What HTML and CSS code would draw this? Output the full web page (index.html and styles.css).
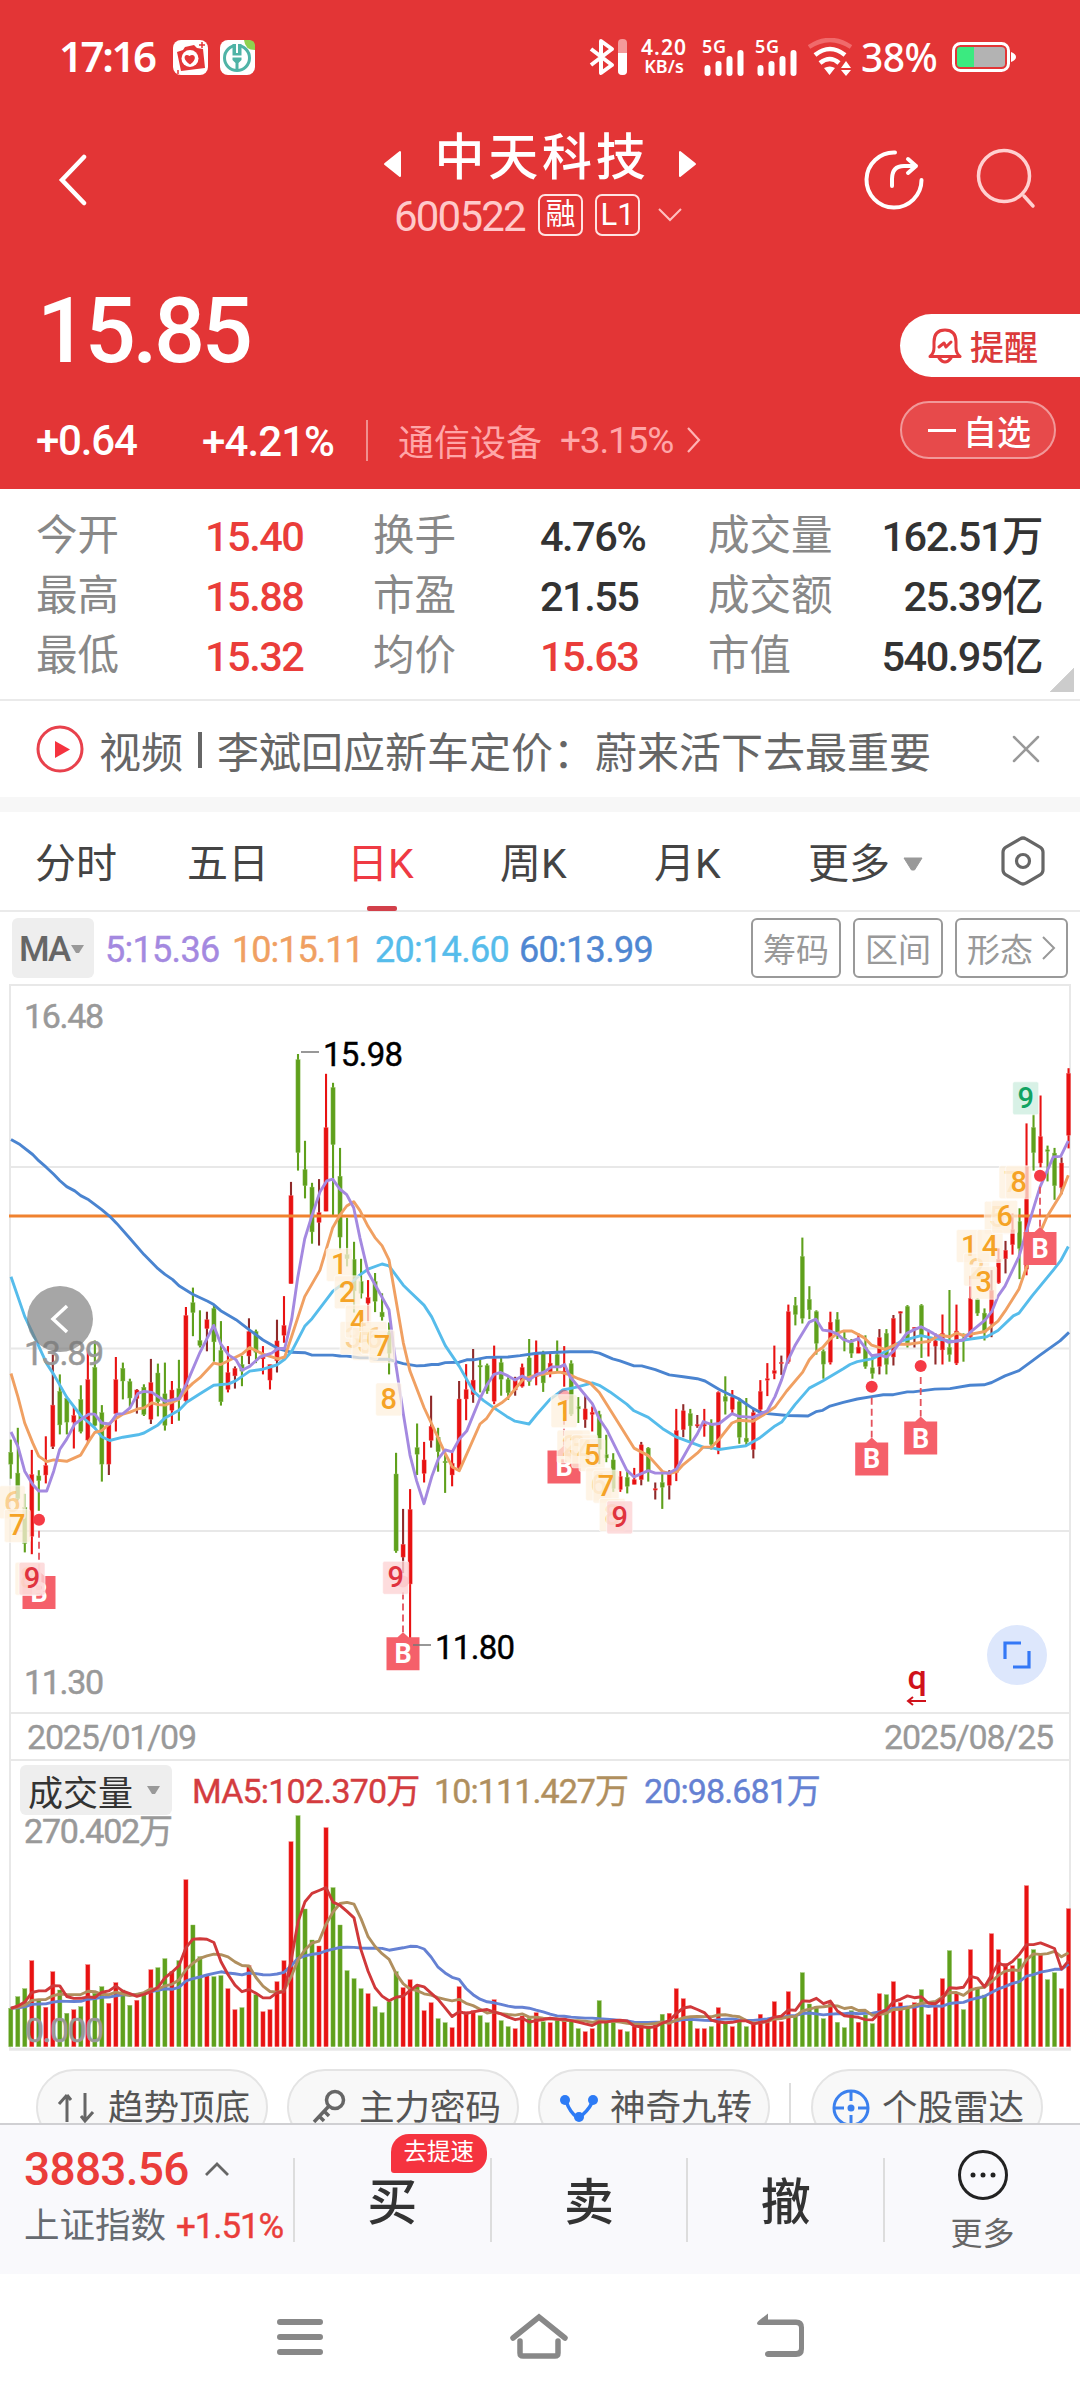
FILE: index.html
```html
<!DOCTYPE html>
<html lang="zh-CN">
<head>
<meta charset="utf-8">
<title>中天科技 600522</title>
<link rel="stylesheet" href="styles.css">
</head>
<body>
<header class="top">
  <div class="status">
    <span class="time">17:16</span>
    <svg class="app-a" width="35" height="35" viewBox="0 0 35 35"><rect width="35" height="35" rx="8" fill="#fff"/><path d="M4 12l6-2 2-3 9-2 3 3 6 1 2 19-24 3z" fill="#e33536"/><circle cx="17" cy="18.500" r="8.500" fill="#fff"/><path d="M17 24.500c-9-6-5-12-.5-8.500 4-3.500 9.500 2 .5 8.500z" fill="#e33536"/><path d="M29 2v6M26 5h6M5 30v4" stroke="#e33536" stroke-width="1.500"/></svg>
    <svg width="35" height="35" viewBox="0 0 35 35"><rect width="35" height="35" rx="8" fill="#fff"/><path d="M24 0h5q6 0 6 6v4Q25 10 24 0z" fill="#8fd14f"/><circle cx="17" cy="18" r="12.500" fill="none" stroke="#4fb3a6" stroke-width="3"/><path d="M12.500 4h9v16l-3 3v8h-3v-8l-3-3z" fill="#4fb3a6"/><path d="M17 4v9M12 16.500h10" stroke="#fff" stroke-width="2"/></svg>
    <span class="grow"></span>
    <svg width="38" height="38" viewBox="0 0 38 38"><path d="M2 11l21 16-11 8V3l11 8L2 27" fill="none" stroke="#fff" stroke-width="4" stroke-linejoin="round"/><rect x="29" y="1" width="9" height="36" rx="4" fill="#f4999a"/><path d="M29 15h9v18q0 4-4.500 4T29 33z" fill="#fff"/></svg>
    <span class="net"><b>4.20</b><b>KB/s</b></span>
    <svg width="42" height="38" viewBox="0 0 42 38" class="sig"><text x="0" y="14.500" textLength="24">5G</text><path d="M5.500 30v5M16.500 26v9M27.500 21v14M38.500 15v20" class="bars"/></svg>
    <svg width="42" height="38" viewBox="0 0 42 38" class="sig s2"><text x="0" y="14.500" textLength="24">5G</text><path d="M5.500 30v5M16.500 26v9M27.500 21v14M38.500 15v20" class="bars"/></svg>
    <svg class="wifi" width="44" height="38" viewBox="0 0 44 38"><g fill="none" stroke="#fff" stroke-width="4.500"><path d="M1 9q21-14 42 0" stroke="#f06a6b"/><path d="M7 17q15-12 30 0M12 25q10-8 19 0"/></g><path d="M16 30q6-3 11 0l-5.500 7zM33 30l5-7 5 7zM33 32h10l-5 6z" fill="#fff"/></svg>
    <span class="pct">38%</span>
    <svg class="bat" width="66" height="32" viewBox="0 0 66 32"><rect x="1.500" y="2.500" width="55" height="27" rx="7" fill="none" stroke="#fff" stroke-width="3"/><path d="M5 9q0-3 3-3h14v20H8q-3 0-3-3z" fill="#3bea80"/><path d="M22 6h27q4 0 4 3v14q0 3-4 3H22z" fill="#b3b3b3"/><path d="M59 11q5 2 5 5t-5 5z" fill="#fff"/></svg>
  </div>

  <nav class="titlebar">
    <svg class="back" width="32" height="52" viewBox="0 0 32 52"><path d="M28 3L6 26l22 23" fill="none" stroke="#fff" stroke-width="4.500" stroke-linecap="round"/></svg>
    <div class="name">
      <div class="name-row">
        <svg width="20" height="28" viewBox="0 0 20 28"><path d="M17 2v24L2 14z" fill="#fff" stroke="#fff" stroke-width="2" stroke-linejoin="round"/></svg>
        <h1>中天科技</h1>
        <svg width="20" height="28" viewBox="0 0 20 28"><path d="M3 2v24l15-12z" fill="#fff" stroke="#fff" stroke-width="2" stroke-linejoin="round"/></svg>
      </div>
      <div class="code-row"><span class="code">600522</span><span class="tag">融</span><span class="tag l1">L1</span>
        <svg width="26" height="16" viewBox="0 0 26 16"><path d="M2 2l11 11L24 2" fill="none" stroke="#ffc0c1" stroke-width="2"/></svg></div>
    </div>
    <svg class="share" width="62" height="62" viewBox="0 0 62 62"><g fill="none" stroke="#fff" stroke-width="4" stroke-linecap="round" stroke-linejoin="round"><path d="M32 3.500A27.500 27.500 0 1 0 58.500 31"/><path d="M29 37v-7q0-13 12-13h12M45 10l8 7-8 7"/></g></svg>
    <svg class="search" width="62" height="62" viewBox="0 0 62 62"><circle cx="28" cy="28" r="25.500" fill="none" stroke="#ffd0d0" stroke-width="3.500"/><path d="M48 48l9 10" stroke="#ffd0d0" stroke-width="3.500" stroke-linecap="round"/></svg>
  </nav>

  <div class="quote">
    <div class="quote-main">
      <div class="price">15.85</div>
      <div class="change"><span class="diff">+0.64</span><span class="rate">+4.21%</span><span class="sector">通信设备</span><span class="sector-rate">+3.15%</span>
        <svg width="16" height="28" viewBox="0 0 16 28"><path d="M2 2l11 12L2 26" fill="none" stroke="#ffb3b4" stroke-width="2.200"/></svg></div>
    </div>
    <div class="actions">
      <span class="remind"><svg width="34" height="36" viewBox="0 0 34 36"><g fill="none" stroke="#e33b3e" stroke-width="3" stroke-linejoin="round" stroke-linecap="round"><path d="M2 28.500q4-3 4-9V14Q6 2 17 2t11 12v5.500q0 6 4 9z"/><path d="M11 30q6 8 12 0M11 19l5-4 2 4 5-5"/></g></svg>提醒</span>
      <span class="watch"><i></i>自选</span>
    </div>
  </div>
</header>

<section class="stats">
  <span class="k">今开</span><span class="v up">15.40</span><span class="k">换手</span><span class="v">4.76%</span><span class="k">成交量</span><span class="v end">162.51万</span>
  <span class="k">最高</span><span class="v up">15.88</span><span class="k">市盈</span><span class="v">21.55</span><span class="k">成交额</span><span class="v end">25.39亿</span>
  <span class="k">最低</span><span class="v up">15.32</span><span class="k">均价</span><span class="v up">15.63</span><span class="k">市值</span><span class="v end">540.95亿</span>
  <i class="corner"></i>
</section>

<section class="news">
  <svg width="48" height="48" viewBox="0 0 48 48"><circle cx="24" cy="24" r="22" fill="none" stroke="#e8414c" stroke-width="3"/><path d="M19 16v17l15-8.500z" fill="#f5333f"/></svg>
  <span class="headline">视频<i></i>李斌回应新车定价：蔚来活下去最重要</span>
  <svg class="close" width="28" height="28" viewBox="0 0 28 28"><path d="M2 2l24 24M26 2L2 26" stroke="#999" stroke-width="2.500" stroke-linecap="round"/></svg>
</section>

<nav class="tabs">
  <span>分时</span><span>五日</span><span class="on">日K</span><span>周K</span><span>月K</span><span class="more">更多<svg width="22" height="15" viewBox="0 0 22 15"><path d="M2 1h18L12.500 13h-3z" fill="#999" stroke="#999" stroke-linejoin="round"/></svg></span>
  <svg class="hex" width="46" height="50" viewBox="0 0 46 50"><path d="M20 3q3-2 6 0l14 8q3 2 3 5v18q0 3-3 5l-14 8q-3 2-6 0L6 39q-3-2-3-5V16q0-3 3-5z" fill="none" stroke="#666" stroke-width="3.200"/><circle cx="23" cy="25" r="6.500" fill="none" stroke="#666" stroke-width="3.200"/></svg>
</nav>

<div class="ma-row">
  <span class="ma-btn">MA<svg width="15" height="10" viewBox="0 0 15 10"><path d="M1 1h13L9 9H6z" fill="#999"/></svg></span>
  <span class="ma m5">5:15.36</span><span class="ma m10">10:15.11</span><span class="ma m20">20:14.60</span><span class="ma m60">60:13.99</span>
  <span class="box">筹码</span><span class="box">区间</span><span class="box wide">形态<svg width="14" height="26" viewBox="0 0 14 26"><path d="M1 2l11 11L1 24" fill="none" stroke="#999" stroke-width="2"/></svg></span>
</div>

<svg class="price-chart" id="price" width="1080" height="728" viewBox="0 984 1080 728">
  <path class="grid" d="M9 985H1071M10 1167H1070M10 1348.500H1070M10 1531H1070M10 984V1712M1070 984V1712"/>
  <g id="candles"></g>
  <path d="M9 1216H1071" stroke="#f0822f" stroke-width="2.800"/>
  <g id="averages"></g>
  <g id="marks"></g>
  <g class="axis"><text x="24" y="1028" textLength="80">16.48</text><text x="24" y="1364.500" textLength="80">13.89</text><text x="24" y="1693.500" textLength="80">11.30</text></g>
  <path d="M301 1052H319M413 1645H431" stroke="#777" stroke-width="1.500"/>
  <g class="peak"><text x="323" y="1066" textLength="80">15.98</text><text x="435" y="1659" textLength="80">11.80</text></g>
  <circle cx="60" cy="1319" r="33" fill="#777" fill-opacity=".65"/>
  <path d="M67 1306L53 1319l14 13" fill="none" stroke="#fff" stroke-width="3.500"/>
  <circle cx="1017" cy="1655" r="30" fill="#dde7fc"/>
  <path d="M1021 1643h-16v16M1013 1667h16v-16" fill="none" stroke="#3478f6" stroke-width="3.200"/>
  <text class="q" x="917" y="1689">q</text>
  <path d="M926 1701h-17M913 1697l-5 4 5 4" fill="none" stroke="#d0121b" stroke-width="2"/>
</svg>

<div class="dates"><span>2025/01/09</span><span>2025/08/25</span></div>

<section class="volume">
  <svg id="volume" width="1080" height="291" viewBox="0 1760 1080 291">
    <path class="grid" d="M10 1760V2049M1070 1760V2049"/>
    <g id="bars"></g><g id="vol-averages"></g>
    <path d="M9 2049.300H1071" stroke="#e8e8e8" stroke-width="3"/>
    <g class="axis light"><text x="24" y="1843" textLength="149">270.402万</text><text x="25" y="2042" textLength="79">0.000</text></g>
  </svg>
  <div class="vol-legend"><span class="vol-btn">成交量<svg width="15" height="10" viewBox="0 0 15 10"><path d="M1 1h13L9 9H6z" fill="#999"/></svg></span><span class="a5">MA5:102.370万</span><span class="a10">10:111.427万</span><span class="a20">20:98.681万</span></div>
</section>

<section class="pills">
  <span class="pill"><svg width="38" height="34" viewBox="0 0 38 34"><path d="M10 31V4M2 13l8-9M10 4l4 5M28 2v28M24 25l4 5 8-9" fill="none" stroke="#666" stroke-width="3"/></svg>趋势顶底</span>
  <span class="pill p2"><svg width="38" height="38" viewBox="0 0 38 38"><g fill="none" stroke="#666" stroke-width="3.500"><circle cx="24" cy="11" r="8.500"/><path d="M18 17L3 33M8 27l5 5M13 22l5 5"/></g></svg>主力密码</span>
  <span class="pill p3"><svg width="40" height="30" viewBox="0 0 40 30"><path d="M7 8q4 12 12 17 9-5 15-17" fill="none" stroke="#2d7bf5" stroke-width="3.500"/><g fill="#2d7bf5"><circle cx="6" cy="7" r="5"/><circle cx="34" cy="7" r="5"/><circle cx="20" cy="24" r="5"/></g></svg>神奇九转</span>
  <i class="bar"></i>
  <span class="pill p4"><svg width="38" height="38" viewBox="0 0 38 38"><g fill="none" stroke="#3b80ee" stroke-width="3"><circle cx="19" cy="19" r="17"/><path d="M19 2v10M19 26v10M2 19h10M26 19h10"/></g><circle cx="19" cy="19" r="3.500" fill="#3b80ee"/></svg>个股雷达</span>
</section>

<footer class="trade">
  <div class="index"><div class="idx">3883.56<svg width="26" height="16" viewBox="0 0 26 16"><path d="M2 14L13 3l11 11" fill="none" stroke="#666" stroke-width="2.800"/></svg></div><div class="idx-name">上证指数<b>+1.51%</b></div></div>
  <div class="act">买<em>去提速</em></div><div class="act">卖</div><div class="act">撤</div>
  <div class="act last"><svg width="52" height="52" viewBox="0 0 52 52"><circle cx="26" cy="26" r="23.500" fill="none" stroke="#222" stroke-width="3"/><g fill="#222"><circle cx="16" cy="26" r="2.500"/><circle cx="26" cy="26" r="2.500"/><circle cx="36" cy="26" r="2.500"/></g></svg><span>更多</span></div>
</footer>

<nav class="system">
  <svg width="46" height="44" viewBox="0 0 46 44"><path d="M3 8h40M3 23h40M3 38h40" stroke="#888" stroke-width="6" stroke-linecap="round"/></svg>
  <svg width="60" height="48" viewBox="0 0 60 48"><path d="M4 26L30 5l26 21M11 29v12q0 3 3 3h32q3 0 3-3V29" fill="none" stroke="#888" stroke-width="5.500" stroke-linecap="round"/></svg>
  <svg width="52" height="46" viewBox="0 0 52 46"><path d="M5 7.500L14 .5v6h28q8 0 8 8V36q0 8-8 8H14q-3-.5-3-3t3-3h28q3 0 3-3V15q0-3-3-3H5q-4-1-0-4.500z" fill="#888"/></svg>
</nav>
<script src="chart.js"></script>
</body>
</html>
```
FILE: styles.css
```css
* { box-sizing: border-box; }
body { margin: 0; width: 1080px; height: 2400px; overflow: hidden; background: #fff; color: #333; font-family: Roboto, "Noto Sans CJK SC", sans-serif; }
svg { display: block; flex: none; }
h1, i, em, b { margin: 0; font-style: normal; }
.grow { flex: 1; }

.top { height: 489px; background: #e33536; color: #fff; }
.status { display: flex; align-items: center; height: 114px; padding: 0 64px 0 59px; }
.time { width: 114px; padding-bottom: 2px; font: 600 42px/1 "Noto Sans", sans-serif; letter-spacing: -2.400px; }
.app-a { margin-right: 12px; }
.net { display: flex; flex-direction: column; width: 50px; margin-left: 12px; font: 600 20px/19px "Noto Sans", sans-serif; text-align: center; }
.net b { font-weight: 600; }
.net b + b { font-size: 18px; }
.net b:first-child { letter-spacing: 1px; font-size: 21px; }
.sig { margin-left: 13px; font: 600 18px "Noto Sans", sans-serif; fill: #fff; overflow: visible; }
.sig.s2 { margin-left: 11px; }
.bars { stroke: #fff; stroke-width: 6; stroke-linecap: round; }
.wifi { margin-left: 11px; }
.pct { width: 80px; margin-left: 9px; padding-bottom: 2px; font: 500 39px/1 "Noto Sans", sans-serif; letter-spacing: -.6px; white-space: nowrap; }
.bat { margin-left: 11px; margin-right: -2px; }

.titlebar { display: flex; height: 150px; padding: 0 42px 0 56px; }
.back { margin-top: 40px; }
.name { width: 314px; margin-left: 295px; }
.name-row { display: flex; align-items: center; justify-content: space-between; height: 84px; margin-top: 2px; }
.name-row svg { margin-top: 12px; }
h1 { font-size: 50px; font-weight: 500; line-height: 84px; letter-spacing: 3.700px; margin-right: -4px; }
.code-row { display: flex; align-items: center; height: 42px; margin-top: -6px; padding-left: 11px; white-space: nowrap; }
.code { width: 144px; padding-top: 3px; font-size: 42px; color: #ffc9ca; letter-spacing: -1.800px; }
.tag { width: 45px; height: 42px; margin-right: 12px; border: 2px solid #ffe3e3; border-radius: 7px; font-size: 30px; line-height: 36px; text-align: center; }
.l1 { font-size: 31px; margin-right: 17px; line-height: 38px; }
.share { margin: 35px 0 0 166px; }
.search { margin: 34px 0 0 51px; }

.quote { display: flex; justify-content: space-between; }
.price { height: 130px; padding-left: 37px; font-size: 90px; font-weight: 500; line-height: 136px; letter-spacing: -3.400px; }
.change { display: flex; align-items: center; height: 60px; margin-top: 16px; padding-left: 36px; font-size: 42px; font-weight: 500; white-space: nowrap; letter-spacing: -1.200px; }
.diff { width: 166px; }
.rate { width: 166px; height: 41px; line-height: 43px; border-right: 2px solid #f0908f; letter-spacing: -.9px; }
.sector { width: 162px; margin-left: 30px; font-size: 36px; font-weight: 400; color: #ffa6a8; letter-spacing: 0; }
.sector-rate { width: 126px; font-size: 37px; font-weight: 400; color: #ffa6a8; }
.actions { width: 180px; padding-top: 50px; font-size: 34px; font-weight: 500; }
.remind { display: flex; align-items: center; gap: 8px; height: 63px; padding-left: 28px; border-radius: 32px 0 0 32px; background: #fff; color: #db3a3b; }
.watch { display: flex; align-items: center; gap: 7px; width: 156px; height: 58px; margin-top: 24px; padding-left: 26px; border: 2px solid #f19899; border-radius: 29px; background: #e74a4b; }
.watch i { width: 28px; height: 3px; background: #fff; }

.stats { display: grid; grid-template-columns: 169px 168px 167px 168px 160px 174px; grid-auto-rows: 60px; height: 212px; padding: 17px 37px 0 36px; border-bottom: 2px solid #eaeaea; position: relative; font-size: 41.500px; line-height: 60px; white-space: nowrap; }
.k { color: #888; }
.v { font-size: 41.500px; line-height: 62px; font-weight: 500; letter-spacing: -1.500px; }
.up { color: #ea3d3a; }
.end { justify-self: end; }
.corner { position: absolute; right: 6px; bottom: 7px; border: solid transparent; border-width: 0 0 24px 24px; border-bottom-color: #ccc; width: 0; height: 0; clip-path: polygon(100% 0, 100% 100%, 0 100%); background: #ccc; border-left-color: #ccc; }

.news { display: flex; align-items: center; height: 96px; padding: 0 40px 0 36px; font-size: 42px; color: #666; }
.headline { flex: 1; padding-left: 15px; white-space: nowrap; }
.headline i { display: inline-block; width: 4px; height: 36px; margin: 0 15px; background: #666; }
.tabs { display: flex; align-items: center; height: 115px; padding-left: 35px; border-top: 15px solid #f7f7f7; border-bottom: 2px solid #eaeaea; line-height: 98px; color: #444; white-space: nowrap; }
.tabs > span { width: 152px; padding-top: 6px; font-size: 41px; }
.tabs > span:nth-child(2) { width: 160px; }
.tabs > .on { position: relative; width: 153px; color: #ef3a43; }
.on::after { content: ""; position: absolute; left: 20px; bottom: 2px; width: 30px; height: 5px; border-radius: 2px; background: #d2404a; }
.tabs > span:nth-child(4) { width: 154px; }
.tabs > span:nth-child(5) { width: 154px; }
.tabs > .more { display: flex; align-items: center; gap: 12px; width: 192px; }

.ma-row { display: flex; align-items: center; height: 72px; padding: 0 12px; font-size: 36px; white-space: nowrap; }
.ma-btn { display: flex; align-items: center; width: 82px; height: 60px; margin-right: 11px; padding: 2px 0 0 7px; border-radius: 6px; background: #eee; color: #666; letter-spacing: -1.800px; font-weight: 500; font-size: 35px; }
.ma { padding-top: 3px; letter-spacing: -.7px; -webkit-text-stroke: .4px; }
.m5 { width: 127px; color: #a489e0; }
.m10 { width: 143px; color: #f0a062; letter-spacing: -1px; }
.m20 { width: 144px; color: #56bceb; }
.m60 { width: 232px; color: #4f87d2; }
.box { display: flex; align-items: center; justify-content: center; width: 90px; height: 60px; margin-right: 12px; border: 2px solid #999; border-radius: 6px; font-size: 33px; color: #999; }
.box.wide { width: 113px; gap: 9px; margin: 0; }

.grid { fill: none; stroke: #e8e8e8; stroke-width: 2; }
.axis { font-size: 34px; fill: #999; font-weight: 400; stroke: #999; stroke-width: .5px; }
.peak { font-size: 33px; fill: #000; stroke: #000; stroke-width: .4px; }
.q { font: 500 34px Roboto, sans-serif; fill: #d0121b; text-anchor: middle; }
.num { font: 500 29px Roboto, sans-serif; text-anchor: middle; }
.buy { font: 700 27px Roboto, sans-serif; fill: #fff; text-anchor: middle; }
.dates { display: flex; align-items: center; justify-content: space-between; height: 48px; margin: 0 9px; padding: 0 16px; border: 2px solid #e8e8e8; border-bottom: 0; font-size: 34px; color: #999; letter-spacing: -1.200px; -webkit-text-stroke: .3px; }
.volume { display: grid; height: 291px; }
.volume > * { grid-area: 1 / 1; }
.vol-legend { display: flex; align-items: center; align-self: start; height: 60px; margin: -1px 9px 0; padding: 0 0 3px 11px; border-top: 2px solid #e8e8e8; font-size: 34px; white-space: nowrap; letter-spacing: -.9px; }
.vol-btn { display: flex; align-items: center; gap: 13px; width: 152px; height: 50px; margin-right: 20px; padding-left: 8px; border-radius: 6px; background: #eee; color: #333; font-size: 35px; letter-spacing: 0; margin-top: 3px; }
.a5 { width: 242px; color: #d43c3f; letter-spacing: -.8px; }
.a10 { width: 210px; color: #b08f5e; }
.a20 { color: #6581d3; }
.a5, .a10, .a20 { -webkit-text-stroke: .4px; }

.pills { display: flex; height: 72px; padding: 18px 36px 0; overflow: hidden; }
.pill { display: flex; align-items: center; gap: 13px; width: 232px; height: 76px; margin-right: 19px; padding: 1px 0 0 19px; flex: none; border: 2px solid #e4e4e4; border-radius: 38px; background: #f8f8f8; font-size: 35.500px; line-height: 70px; color: #555; white-space: nowrap; }
.p2 { padding-left: 22px; gap: 10px; }
.p3 { gap: 11px; }
.bar { width: 2px; height: 50px; margin: 14px 20px 0 0; background: #ddd; }
.p4 { margin: 0; gap: 12px; }

.trade { display: flex; align-items: center; height: 151px; border-top: 2px solid #d0d0d3; background: #f9f9fc; }
.index { width: 293px; padding-left: 24px; white-space: nowrap; }
.idx { display: flex; align-items: center; gap: 15px; height: 60px; margin-top: -3px; padding-bottom: 3px; font-size: 46px; font-weight: 500; letter-spacing: -.7px; color: #ea3d3a; }
.idx-name { height: 56px; font-size: 35.500px; line-height: 53px; color: #666a70; }
.idx-name b { margin-left: 10px; font-size: 35px; font-weight: 400; letter-spacing: -1.100px; color: #ea3d3a; -webkit-text-stroke: .4px; }
.act { position: relative; width: 197px; height: 84px; border-left: 2px solid #ddd; font-size: 50px; font-weight: 500; line-height: 91px; text-align: center; }
.act em { position: absolute; left: 96px; top: -24px; width: 96px; height: 39px; border-radius: 18px 18px 18px 3px; background: #f5333f; color: #fff; font-size: 23.500px; font-weight: 400; line-height: 36px; }
.last { display: flex; flex-direction: column; align-items: center; }
.last svg { margin-top: -9px; }
.last span { font-size: 32px; font-weight: 400; line-height: 67px; color: #666; }
.system { display: flex; justify-content: space-between; align-items: center; height: 123px; padding: 0 274px 0 277px; }
```
FILE: chart.js
```js
// Every session: colour (R rise, G fall, D rise with dark wick), high, body top, body bottom, low.
const CANDLES = `G 995 1022 1047 1078,G 970 1066 1120 1124,G 1110 1139 1215 1234,R 1017 1069 1200 1238,G 1060 1072 1082 1146,R 988 1050 1070 1088,D 815 922 1010 1015,G 857 893 964 984,G 905 908 958 984,R 925 944 958 1014,G 880 910 978 982,R 802 868 996 1002,G 785 842 965 967,G 922 938 1047 1084,D 960 962 1047 1070,R 820 868 940 978,G 832 844 871 910,G 866 872 907 928,D 888 890 908 940,G 878 884 942 945,D 824 874 952 962,G 834 854 915 946,G 832 898 965 976,R 871 890 933 962,G 826 887 910 955,R 714 732 913 918,G 673 705 726 776,G 721 785 796 800,D 724 741 760 808,G 710 717 788 830,G 744 806 915 923,R 797 853 889 895,D 840 844 860 887,G 818 836 850 882,D 738 766 818 835,G 762 766 810 833,R 797 820 824 857,R 836 836 869 889,D 741 786 828 853,R 691 753 774 790,D 449 478 665 665,G 178 190 387 425,G 362 423 457 484,G 451 460 555 580,D 443 514 535 584,R 220 334 511 511,G 239 249 370 520,G 377 437 566 592,G 525 603 612 628,G 576 613 680 726,G 612 660 685 696,R 657 694 706 747,G 642 660 702 725,G 685 725 735 743,G 747 768 812 857,G 1023 1068 1231 1235,D 1142 1217 1244 1278,R 1100 1143 1301 1425,G 961 1012 1026 1070,R 1000 1038 1067 1086,D 902 967 997 1012,G 970 990 1021 1063,G 1028 1041 1043 1108,R 1022 1045 1070 1094,D 871 909 1055 1060,R 835 889 909 954,D 803 869 900 917,G 823 838 840 895,G 834 838 892 898,R 796 823 914 920,G 822 832 867 902,G 863 868 896 911,D 862 865 890 902,R 834 842 882 885,G 782 822 872 881,R 785 814 862 880,G 807 813 875 894,R 810 833 855 863,G 785 815 841 852,R 797 850 853 883,G 827 834 941 945,G 905 925 930 960,D 903 930 953 970,R 925 937 942 978,G 934 942 1016 1047,G 985 1027 1034 1043,G 1024 1038 1099 1106,R 1062 1073 1101 1106,G 1062 1075 1094 1109,R 1055 1080 1090 1090,D 1000 1006 1080 1092,G 1011 1013 1062 1084,D 1086 1099 1101 1122,G 1065 1086 1096 1142,D 1060 1068 1092 1122,R 930 976 1065 1083,D 920 934 974 990,G 930 940 966 1000,D 943 963 965 970,R 930 963 965 989,G 952 962 1005 1016,R 893 895 1015 1026,G 861 904 914 942,R 890 905 931 940,G 907 915 990 1004,G 907 992 1000 1007,D 930 938 1016 1035,R 869 893 931 945,R 833 866 868 903,R 796 849 855 867,D 817 831 833 858,R 709 724 830 834,G 693 711 730 753,G 567 607 738 749,G 670 698 720 740,G 721 724 791 815,G 804 808 835 866,R 724 746 831 836,G 725 741 770 782,G 767 780 783 808,G 782 790 812 822,R 770 799 812 812,G 774 800 840 845,G 815 843 855 866,D 761 779 840 857,G 761 770 836 857,D 731 738 820 838,D 723 724 726 770,G 710 713 790 800,D 757 757 759 800,G 708 711 775 822,R 762 787 788 819,D 770 786 797 836,R 730 770 805 836,G 678 800 815 830,R 709 765 833 837,G 770 783 785 830,R 648 696 777 780,G 695 698 727 733,G 717 727 768 785,D 636 679 750 778,R 590 613 663 665,D 574 594 612 643,R 516 550 582 603,G 505 533 590 655,R 325 416 634 647,G 305 334 387 425,R 266 353 409 418,G 372 381 383 448,G 377 388 457 487,D 397 409 461 475,R 208 219 350 378`.split(',').map(s => s.split(' '));

// Volume bar tops, three units to a pixel.
const VOLUMES = [925,890,866,782,900,922,815,870,940,929,920,794,880,860,910,848,870,916,901,880,809,803,776,815,782,539,675,770,824,830,827,866,929,923,797,884,935,929,845,782,425,347,627,720,738,383,563,675,812,836,866,881,920,938,905,815,863,839,855,932,908,956,968,983,860,935,932,947,968,899,962,980,986,948,955,938,965,968,962,955,960,986,995,986,902,962,965,989,995,980,972,978,975,943,940,866,896,955,986,986,980,923,965,980,966,980,968,943,960,905,965,875,950,818,912,920,956,910,967,983,932,967,945,971,881,884,845,908,920,908,869,944,915,836,752,878,929,749,863,885,701,749,790,797,776,557,749,764,839,818,866,626];

// Moving averages in three panels of 360 px.
const AVERAGES = [
  ['#4a84d0', '33,359 60,370 98,391 116,404 140,419 161,433 179,446 200,459 224,468 242,478 266,487 305,508 329,522 350,537 390,569 432,603 474,633 495,645 518,656 537,669 578,687 623,702 641,709 662,722 708,741 749,763 789,784 834,802 875,810 914,811 936,816 998,816 1019,818 1040,818 1080,822|24,822 45,825 87,825 108,830 130,834 170,839 194,838 215,836 235,836 256,832 298,831 320,826 342,826 380,821 444,820 480,817 530,812 592,810 630,809 698,809 718,812 758,824 780,828 822,839 845,839 886,847 928,858 970,862 1012,866 1035,871 1078,889|36,902 55,908 75,918 98,929 120,937 142,940 202,944 264,945 288,936 308,933 330,924 370,916 412,909 455,904 490,900 520,900 562,894 580,894 644,888 690,887 750,880 792,879 815,874 855,860 897,849 937,828 960,816 1020,786 1047,768'],
  ['#56bceb', '33,650 74,734 98,770 116,797 140,834 161,857 200,905 242,944 284,970 305,989 329,997 369,990 414,985 432,981 474,964 495,949 537,933 560,916 600,898 641,880 686,877 708,870 749,850 789,846 830,837 854,825 875,808 914,755 936,739 998,681 1019,670 1061,658 1080,646|24,634 66,623 87,627 130,668 150,682 192,710 215,735 256,796 298,840 340,892 370,912 402,928 440,946 465,956 507,962 530,942 570,910 608,890 650,884 697,875 718,880 750,894 800,920 822,934 865,948 908,972 950,990 1030,1011 1060,1013 1078,1016|36,1012 78,1008 120,991 165,966 185,958 225,921 268,886 308,871 370,845 390,836 412,830 455,824 475,818 520,797 545,786 603,775 644,781 700,787 730,784 800,777 834,764 880,733 897,727 937,690 1000,636 1022,616 1045,586'],
  ['#f0a062', '33,855 54,905 74,960 98,1002 116,1030 140,1042 161,1038 200,1041 242,1028 266,999 284,980 305,976 340,954 369,941 390,937 414,930 432,928 456,917 474,921 495,922 537,910 560,888 578,876 600,864 641,833 662,836 708,820 726,814 749,800 789,814 834,824 854,820 875,776 914,692 960,636 998,546 1019,520 1040,500 1061,491 1080,510|24,543 45,567 66,584 87,614 108,700 130,790 150,850 192,927 215,962 256,1025 277,1053 298,1061 320,1026 360,962 380,950 402,927 425,917 444,906 465,888 490,867 520,860 570,854 600,852 630,858 655,866 690,875 718,895 780,965 822,1013 865,1029 908,1063 928,1067 950,1063 970,1048 1012,1024 1030,1011 1055,1011 1078,994|36,960 57,954 99,956 130,943 165,926 200,892 248,852 268,826 290,808 308,800 330,782 352,770 370,765 395,765 432,779 455,795 495,804 530,793 565,793 625,787 660,774 690,777 710,769 730,775 795,766 834,744 855,723 897,676 937,594 980,524 1022,476 1045,435'],
  ['#a489e0', '33,979 54,1010 74,1062 98,1090 116,1104 140,1104 161,1062 179,1016 200,994 224,962 266,941 284,941 305,960 329,962 350,941 369,940 390,928 414,897 432,893 456,895 495,914 537,908 560,876 600,810 641,753 662,792 686,816 708,826 726,848 749,840 780,820 815,812 834,802 854,802 875,740 893,652 914,570 936,520 960,470 980,447 998,443 1019,464 1040,476 1061,504 1080,568|24,640 87,720 108,838 130,940 150,1028 170,1083 192,1131 215,1074 235,1036 256,1017 277,1021 298,994 320,977 360,908 380,880 402,857 422,853 444,860 465,869 487,860 507,869 530,857 550,853 575,841 600,841 614,836 630,862 655,883 697,919 718,951 740,974 800,1060 822,1074 865,1061 886,1066 928,1066 950,1057 990,1007 1012,983 1030,957 1055,963 1078,961|36,940 57,946 99,948 142,934 165,904 185,868 202,830 225,796 268,746 288,740 308,763 330,765 352,771 370,783 390,788 415,781 432,797 455,817 475,815 500,820 520,808 560,770 580,763 603,756 640,770 685,789 730,784 750,768 795,742 815,724 834,691 855,670 897,607 937,513 960,460 1000,396 1022,395 1045,362']
];

// Nine-turn counters: panel, x, baseline, digit, style (n normal, f faded, r red, g green).
const NUMBERS = '0 37 1148 6 f,0 52 1198 7 n,0 84 1310 8 f,0 96 1310 9 r,0 1018 645 1 n,0 1042 703 2 n,0 1059 800 3 f,0 1075 765 4 n,1 15 812 5 f,1 42 800 6 f,1 66 818 7 n,1 86 930 8 n,1 107 1308 9 r,1 612 955 1 n,1 630 1030 2 f,1 652 1030 3 f,1 674 1040 4 f,1 696 1048 5 n,1 716 1110 6 f,1 738 1115 7 n,1 757 1175 8 f,1 779 1180 9 r,2 748 605 1 n,2 770 655 2 f,2 791 683 3 n,2 832 545 5 f,2 810 605 4 n,2 854 543 6 n,2 876 470 7 f,2 896 470 8 n,2 917 292 9 g'.split(',').map(s => s.split(' '));
// Buy signals: panel, x, dot y, box top, faded dot.
const BUYS = [[0, 117, 1165, 1284, 0], [1, 129, 1296, 1414, 1], [1, 612, 902, 1018, 1], [2, 455, 883, 1001, 0], [2, 602, 839, 957, 0], [2, 960, 436, 555, 0]];

const px = (p, x) => (p * 360 + x / 3).toFixed(1);
const py = y => (970 + y / 2.119).toFixed(1);
const barX = i => 10.8 + i * 7.005;
const put = (id, html) => { document.getElementById(id).innerHTML = html; };
const body = c => c === 'G' ? '#5fa01c' : '#e81212';
const halo = c => c === 'G' ? '#8fbf60' : '#f27070';

put('candles', CANDLES.map(([c, h, t, b, l], i) => {
  const x = barX(i), top = +py(t), tall = Math.max(1.5, py(b) - top);
  const wick = c === 'D' ? '#8f2a2a' : body(c);
  return `<path d="M${x} ${py(h)}V${py(l)}" stroke="${wick}" stroke-width="2.100"/><rect x="${x - 2.1}" y="${top}" width="4.200" height="${tall}" fill="${body(c)}" stroke="${halo(c)}" stroke-width=".4"/>`;
}).join(''));

put('averages', AVERAGES.map(([color, data]) => {
  const pts = data.split('|').map((part, p) => part.split(' ').map(s => { const [x, y] = s.split(','); return px(p, +x) + ',' + py(+y); }).join(' ')).join(' ');
  return `<polyline points="${pts}" fill="none" stroke="${color}" stroke-width="2.900" stroke-linejoin="round"/>`;
}).join(''));

const buys = BUYS.map(([p, x, dot, top, faded]) => {
  const cx = +px(p, x), y = +py(top), d = +py(dot);
  return `<path d="M${cx} ${d + 11}V${y - 5}" stroke="#e4525c" stroke-width="1.800" stroke-dasharray="7 4"/><path d="M${cx - 16.5} ${y}h11l5.500-5 5.500 5h11v33h-33z" fill="#f5606a"/><text class="buy" x="${cx}" y="${y + 26}">B</text><circle cx="${cx}" cy="${d}" r="6" fill="#f53a45" fill-opacity="${faded ? .45 : 1}"/>`;
}).join('');
const tones = { n: ['#fef0dd', '#f5a326', .75, 1], f: ['#fef0dd', '#f5a326', .75, .45], r: ['#fdd3d5', '#e0333f', .8, 1], g: ['#d8f1e6', '#12a362', 1, 1] };
const numbers = NUMBERS.map(([p, x, y, n, s]) => {
  const cx = +px(+p, +x), by = +py(+y), [bg, fg, bo, fo] = tones[s];
  return `<rect x="${cx - 13}" y="${by - 26}" width="26" height="33" rx="2" fill="${bg}" fill-opacity="${bo}" stroke="#fff" stroke-opacity=".6"/><text class="num" x="${cx}" y="${by}" fill="${fg}" fill-opacity="${fo}">${n}</text>`;
}).join('');
put('marks', buys + numbers);

const vy = t => 1700 + t / 3;
put('bars', VOLUMES.map((t, i) => {
  const c = CANDLES[i][0];
  return `<rect x="${barX(i) - 2.1}" y="${vy(t)}" width="4.200" height="${2046.7 - vy(t)}" fill="${body(c)}" stroke="${halo(c)}" stroke-width=".4"/>`;
}).join(''));
put('vol-averages', [[20, '#6581d3'], [10, '#b08f5e'], [5, '#d0383a']].map(([n, color]) => {
  const padded = Array(20).fill(925).concat(VOLUMES);
  const pts = VOLUMES.map((_, i) => {
    const win = padded.slice(i + 21 - n, i + 21);
    return barX(i).toFixed(1) + ',' + vy(win.reduce((a, b) => a + b) / n).toFixed(1);
  }).join(' ');
  return `<polyline points="${pts}" fill="none" stroke="${color}" stroke-width="2.900" stroke-linejoin="round"/>`;
}).join(''));
```
